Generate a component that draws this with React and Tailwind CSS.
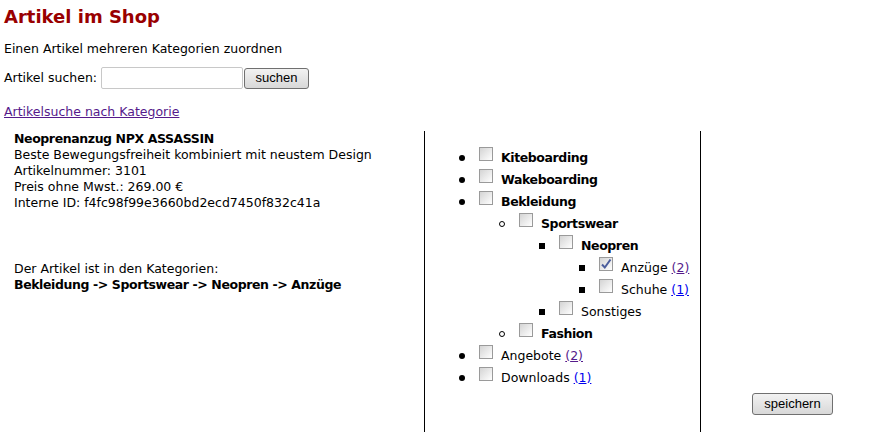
import React from 'react';

const tree = [
  { label: 'Kiteboarding', bold: true },
  { label: 'Wakeboarding', bold: true },
  {
    label: 'Bekleidung',
    bold: true,
    children: [
      {
        label: 'Sportswear',
        bold: true,
        children: [
          {
            label: 'Neopren',
            bold: true,
            children: [
              { label: 'Anzüge', count: 2, visited: true, checked: true },
              { label: 'Schuhe', count: 1 },
            ],
          },
          { label: 'Sonstiges' },
        ],
      },
      { label: 'Fashion', bold: true },
    ],
  },
  { label: 'Angebote', count: 2, visited: true },
  { label: 'Downloads', count: 1 },
];

function Bullet({ depth }) {
  if (depth === 0) return <span className="w-[6px] h-[6px] rounded-full bg-black shrink-0" />;
  if (depth === 1) return <span className="w-[6px] h-[6px] rounded-full border border-black shrink-0" />;
  return <span className="w-[6px] h-[6px] bg-black shrink-0" />;
}

function Box({ checked }) {
  return (
    <span className="ml-[14px] self-start inline-flex w-[14px] h-[14px] border border-[#9a9a9a] bg-gradient-to-br from-[#d4d4d4] to-[#ffffff] items-center justify-center shrink-0">
      {checked && (
        <svg width="12" height="12" viewBox="0 0 12 12">
          <path d="M2 6.5 L4.8 9.5 L10.5 1.5" fill="none" stroke="#4b5d9c" strokeWidth="2" />
        </svg>
      )}
    </span>
  );
}

function Tree({ items, depth = 0 }) {
  return (
    <ul className={depth === 0 ? 'ml-0' : 'ml-[40px]'}>
      {items.map(it => (
        <li key={it.label}>
          <div className="flex items-center h-[22px]">
            <Bullet depth={depth} />
            <Box checked={it.checked} />
            <span className={`ml-[8px] whitespace-nowrap ${it.bold ? 'font-bold tracking-[-0.4px]' : ''}`}>
              {it.label}
              {it.count && (
                <>
                  {' '}
                  <a href="#" className={`underline ${it.visited ? 'text-[#551a8b]' : 'text-[#0000ee]'}`}>({it.count})</a>
                </>
              )}
            </span>
          </div>
          {it.children && <Tree items={it.children} depth={depth + 1} />}
        </li>
      ))}
    </ul>
  );
}

const btn = 'border border-[#707070] rounded-[3px] bg-gradient-to-b from-[#f2f2f2] to-[#d8d8d8] text-[13px] text-black font-["Liberation_Sans",Arial,sans-serif]';

export default function App() {
  return (
    <div className="bg-white text-black text-[12.5px] leading-[16px] font-['DejaVu_Sans',Verdana,sans-serif] px-[4px] h-[432px] overflow-hidden">
      <h1 className="text-[#990000] font-bold text-[18px] leading-[22px] pt-[6px] m-0">Artikel im Shop</h1>

      <p className="mt-[13px]">Einen Artikel mehreren Kategorien zuordnen</p>

      <div className="flex items-center mt-[10px]">
        <span>Artikel suchen:</span>
        <input className="ml-[4px] w-[142px] h-[22px] border border-[#c8c8c8] rounded-[2px] bg-white outline-none" />
        <button className={`${btn} ml-[1px] w-[65px] h-[21px]`}>suchen</button>
      </div>

      <a href="#" className="block mt-[15px] underline text-[#551a8b]">Artikelsuche nach Kategorie</a>

      <div className="flex mt-[11px] h-[320px]">
        <div className="w-[421px] pl-[10px] border-r border-black">
          <div className="font-bold tracking-[-0.4px]">Neoprenanzug NPX ASSASSIN</div>
          <div>Beste Bewegungsfreiheit kombiniert mit neustem Design</div>
          <div>Artikelnummer: 3101</div>
          <div>Preis ohne Mwst.: 269.00 €</div>
          <div>Interne ID: f4fc98f99e3660bd2ecd7450f832c41a</div>
          <div className="mt-[50px]">Der Artikel ist in den Kategorien:</div>
          <div className="font-bold tracking-[-0.4px]">Bekleidung -&gt; Sportswear -&gt; Neopren -&gt; Anzüge</div>
        </div>
        <div className="w-[276px] pl-[34px] pt-[16px] border-r border-black">
          <Tree items={tree} />
        </div>
        <div className="flex-1">
          <button className={`${btn} ml-[51px] mt-[262px] w-[81px] h-[22px]`}>speichern</button>
        </div>
      </div>
    </div>
  );
}
